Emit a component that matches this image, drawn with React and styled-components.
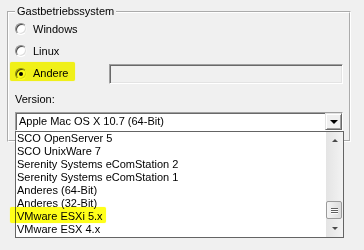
import React from 'react';
import styled, { createGlobalStyle } from 'styled-components';

const GlobalStyle = createGlobalStyle`
    html, body {
        margin: 0;
        padding: 0;
        background: #f0f0f0;
    }

    body {
        font-family: "Liberation Sans", Arial, sans-serif;
        font-size: 11px;
        color: #000;
    }
`;

const Page = styled.div`
    width: 364px;
    height: 250px;
    box-sizing: border-box;
    padding: 5px 0 0 7px;
    overflow: hidden;
`;

// etched frame: grey line with a white line beside it, like a Windows group box
const GroupBox = styled.fieldset`
    margin: 0;
    width: 344px;
    box-sizing: border-box;
    border: 2px groove #fff;
    border-radius: 0;
    padding: 0 6px 9px 6px;
    min-inline-size: 0;
`;

const Legend = styled.legend`
    padding: 0 2px;
    line-height: 13px;
`;

const Options = styled.div`
    display: flex;
    flex-direction: column;
`;

const OptionRow = styled.div`
    display: flex;
    align-items: center;
    height: ${p => p.$h || 22}px;
`;

const Choice = styled.label`
    position: relative;
    display: flex;
    align-items: center;
    line-height: 13px;
`;

const Radio = styled.span`
    position: relative;
    width: 12px;
    height: 12px;
    box-sizing: border-box;
    border-radius: 50%;
    border: 1px solid;
    border-color: #8d8d8d #f4f4f4 #ffffff #8d8d8d;
    background: #fff;
    box-shadow: inset 1px 1px 0 #4a4a4a, inset -1px -1px 0 #dcdcdc;
    margin-right: 6px;

    &::after {
        content: '';
        display: ${p => (p.$checked ? 'block' : 'none')};
        position: absolute;
        left: 3px;
        top: 3px;
        width: 4px;
        height: 4px;
        border-radius: 50%;
        background: #000;
    }
`;

const Marker = styled.span`
    position: absolute;
    left: ${p => p.$x}px;
    top: ${p => p.$y}px;
    width: ${p => p.$w}px;
    height: ${p => p.$h}px;
    background: #ffff1a;
    border-radius: 2px;
    box-shadow: 0 0 1px 0 #ffff40;
    mix-blend-mode: multiply;
    pointer-events: none;
    z-index: 5;
`;

const TextBox = styled.div`
    margin-left: auto;
    width: 234px;
    height: 20px;
    box-sizing: border-box;
    background: #f0f0f0;
    border-style: solid;
    border-width: 1px;
    border-color: #a0a0a0 #ffffff #ffffff #a0a0a0;
    box-shadow: inset 1px 1px 0 #696969, inset -1px -1px 0 #e3e3e3;
`;

const FieldLabel = styled.div`
    margin: 8px 0 6px;
    line-height: 13px;
`;

const ComboWrap = styled.div`
    position: relative;
    width: 328px;
`;

const Combo = styled.div`
    display: flex;
    align-items: stretch;
    height: 19px;
    box-sizing: border-box;
    background: #fff;
    border-style: solid;
    border-width: 1px;
    border-color: #a0a0a0 #ffffff #ffffff #a0a0a0;
    box-shadow: inset 1px 1px 0 #696969;
`;

const ComboValue = styled.div`
    flex: 1;
    padding: 1px 0 0 3px;
    line-height: 15px;
    white-space: nowrap;
`;

const DropButton = styled.div`
    width: 17px;
    display: flex;
    align-items: center;
    justify-content: center;
    box-sizing: border-box;
    background: #f0f0f0;
    border-style: solid;
    border-width: 1px;
    border-color: #e3e3e3 #696969 #696969 #e3e3e3;
    box-shadow: inset 1px 1px 0 #fff, inset -1px -1px 0 #a0a0a0;
`;

const Arrow = styled.span`
    width: 0;
    height: 0;
    border-left: ${p => p.$size}px solid transparent;
    border-right: ${p => p.$size}px solid transparent;
    ${p => (p.$up ? 'border-bottom' : 'border-top')}: ${p => p.$size}px solid ${p => p.$color};
`;

const DropList = styled.div`
    position: absolute;
    left: 0;
    top: 100%;
    z-index: 3;
    width: 329px;
    height: 107px;
    box-sizing: border-box;
    background: #fff;
    border: 1px solid #646464;
    display: grid;
    grid-template-columns: 1fr 17px;
`;

const Items = styled.ul`
    list-style: none;
    margin: 0;
    padding: 0;
`;

const Item = styled.li`
    position: relative;
    height: 13px;
    line-height: 13px;
    padding-left: 1px;
    white-space: nowrap;
`;

const ScrollBar = styled.div`
    display: flex;
    flex-direction: column;
    background: linear-gradient(to right, #e4e4e4, #f3f3f3);
`;

const ScrollButton = styled.div`
    height: 17px;
    display: flex;
    align-items: center;
    justify-content: center;
`;

const Track = styled.div`
    flex: 1;
    display: flex;
    flex-direction: column;
    justify-content: flex-end;
    padding-bottom: 1px;
`;

const Thumb = styled.div`
    height: 18px;
    margin: 0 1px 0 0;
    box-sizing: border-box;
    border: 1px solid #9b9b9b;
    border-radius: 2px;
    background: linear-gradient(to right, #f4f4f4, #e8e8e8 50%, #dcdcdc);
    display: flex;
    flex-direction: column;
    align-items: center;
    justify-content: center;
    gap: 1px;
`;

const Grip = styled.span`
    width: 7px;
    height: 1px;
    background: #5f5f5f;
    box-shadow: 0 1px 0 #fdfdfd;
`;

const systems = [
    'SCO OpenServer 5',
    'SCO UnixWare 7',
    'Serenity Systems eComStation 2',
    'Serenity Systems eComStation 1',
    'Anderes (64-Bit)',
    'Anderes (32-Bit)',
    'VMware ESXi 5.x',
    'VMware ESX 4.x',
];

const App = () => {
    return (
        <Page>
            <GlobalStyle />
            <GroupBox>
                <Legend>Gastbetriebssystem</Legend>
                <Options>
                    <OptionRow>
                        <Choice><Radio />Windows</Choice>
                    </OptionRow>
                    <OptionRow>
                        <Choice><Radio />Linux</Choice>
                    </OptionRow>
                    <OptionRow $h={23}>
                        <Choice>
                            <Radio $checked />Andere
                            <Marker $x={-5} $y={-5} $w={65} $h={19} />
                        </Choice>
                        <TextBox />
                    </OptionRow>
                </Options>
                <FieldLabel>Version:</FieldLabel>
                <ComboWrap>
                    <Combo>
                        <ComboValue>Apple Mac OS X 10.7 (64-Bit)</ComboValue>
                        <DropButton><Arrow $size={4} $color="#000" /></DropButton>
                    </Combo>
                    <DropList>
                        <Items>
                            {systems.map(name => (
                                <Item key={name}>
                                    {name}
                                    {name === 'VMware ESXi 5.x' && <Marker $x={-6} $y={-3} $w={96} $h={16} />}
                                </Item>
                            ))}
                        </Items>
                        <ScrollBar>
                            <ScrollButton><Arrow $up $size={3} $color="#4a4a4a" /></ScrollButton>
                            <Track>
                                <Thumb>
                                    <Grip />
                                    <Grip />
                                    <Grip />
                                </Thumb>
                            </Track>
                            <ScrollButton><Arrow $size={3} $color="#4a4a4a" /></ScrollButton>
                        </ScrollBar>
                    </DropList>
                </ComboWrap>
            </GroupBox>
        </Page>
    );
};

export default App;
